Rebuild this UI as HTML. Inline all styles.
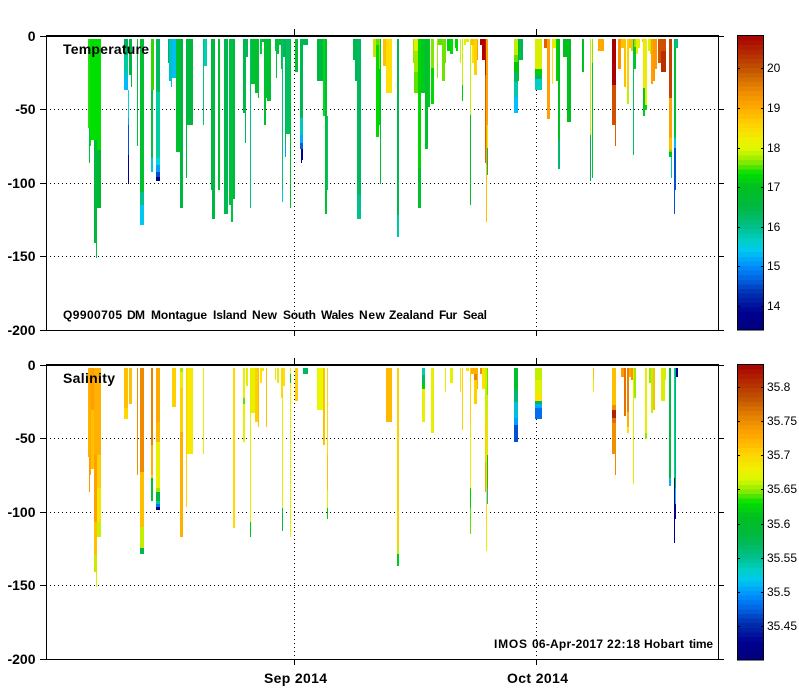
<!DOCTYPE html>
<html><head><meta charset="utf-8"><title>Temperature and Salinity</title>
<style>html,body{margin:0;padding:0;background:#fff}svg{display:block}text{font-family:"Liberation Sans",Arial,sans-serif;fill:#000}.b{font-weight:bold;font-size:14px}.s{font-weight:bold;font-size:12px}.c{font-size:12px}</style></head>
<body>
<svg xmlns="http://www.w3.org/2000/svg" width="799" height="700" viewBox="0 0 799 700">
<defs>
<g id="cb" shape-rendering="crispEdges">
<rect y="0" width="26" height="1.1" fill="#a80600"/><rect y="1" width="26" height="1.1" fill="#ad1100"/><rect y="2" width="26" height="1.1" fill="#b11d00"/><rect y="3" width="26" height="1.1" fill="#b42800"/><rect y="4" width="26" height="1.1" fill="#b73300"/><rect y="5" width="26" height="1.1" fill="#bb3f00"/><rect y="6" width="26" height="1.1" fill="#bf4b00"/><rect y="7" width="26" height="1.1" fill="#c45600"/>
<rect y="8" width="26" height="1.1" fill="#cd6200"/><rect y="9" width="26" height="1.1" fill="#d66e00"/><rect y="10" width="26" height="1.1" fill="#df7900"/><rect y="11" width="26" height="1.1" fill="#e88500"/><rect y="12" width="26" height="1.1" fill="#f09000"/><rect y="13" width="26" height="1.1" fill="#f59900"/><rect y="14" width="26" height="1.1" fill="#fba100"/><rect y="15" width="26" height="1.1" fill="#ffa800"/>
<rect y="16" width="26" height="1.1" fill="#ffb400"/><rect y="17" width="26" height="1.1" fill="#ffbf00"/><rect y="18" width="26" height="1.1" fill="#ffcb00"/><rect y="19" width="26" height="1.1" fill="#fdd500"/><rect y="20" width="26" height="1.1" fill="#f9dd00"/><rect y="21" width="26" height="1.1" fill="#f5e600"/><rect y="22" width="26" height="1.1" fill="#f0ef00"/><rect y="23" width="26" height="1.1" fill="#e7f300"/>
<rect y="24" width="26" height="1.1" fill="#dcf700"/><rect y="25" width="26" height="1.1" fill="#c4f400"/><rect y="26" width="26" height="1.1" fill="#a4ef00"/><rect y="27" width="26" height="1.1" fill="#84e900"/><rect y="28" width="26" height="1.1" fill="#4fe500"/><rect y="29" width="26" height="1.1" fill="#13e100"/><rect y="30" width="26" height="1.1" fill="#00d907"/><rect y="31" width="26" height="1.1" fill="#00d011"/>
<rect y="32" width="26" height="1.1" fill="#00c41c"/><rect y="33" width="26" height="1.1" fill="#00bf24"/><rect y="34" width="26" height="1.1" fill="#00bd2c"/><rect y="35" width="26" height="1.1" fill="#00bb34"/><rect y="36" width="26" height="1.1" fill="#00b93b"/><rect y="37" width="26" height="1.1" fill="#00b946"/><rect y="38" width="26" height="1.1" fill="#00ba57"/><rect y="39" width="26" height="1.1" fill="#00bc67"/>
<rect y="40" width="26" height="1.1" fill="#00be79"/><rect y="41" width="26" height="1.1" fill="#00bf89"/><rect y="42" width="26" height="1.1" fill="#00c49c"/><rect y="43" width="26" height="1.1" fill="#00cbb2"/><rect y="44" width="26" height="1.1" fill="#00cfc6"/><rect y="45" width="26" height="1.1" fill="#00ccd9"/><rect y="46" width="26" height="1.1" fill="#00c9ed"/><rect y="47" width="26" height="1.1" fill="#00bbf3"/>
<rect y="48" width="26" height="1.1" fill="#00a9f8"/><rect y="49" width="26" height="1.1" fill="#0098fd"/><rect y="50" width="26" height="1.1" fill="#0087f9"/><rect y="51" width="26" height="1.1" fill="#0078f0"/><rect y="52" width="26" height="1.1" fill="#0069e6"/><rect y="53" width="26" height="1.1" fill="#005ada"/><rect y="54" width="26" height="1.1" fill="#0048c8"/><rect y="55" width="26" height="1.1" fill="#0038b8"/>
<rect y="56" width="26" height="1.1" fill="#002aac"/><rect y="57" width="26" height="1.1" fill="#001fa5"/><rect y="58" width="26" height="1.1" fill="#00139d"/><rect y="59" width="26" height="1.1" fill="#000794"/><rect y="60" width="26" height="1.1" fill="#00008f"/><rect y="61" width="26" height="1.1" fill="#00008a"/><rect y="62" width="26" height="1.1" fill="#000085"/><rect y="63" width="26" height="1" fill="#000081"/>
</g>
</defs>
<g shape-rendering="crispEdges">
<!-- GRID dotted -->
<g stroke="#000" stroke-width="1" stroke-dasharray="1 3" fill="none">
<path d="M50 109.5H718M50 183.5H718M50 256.5H718M50 438.5H718M50 512.5H718M50 585.5H718"/>
<path d="M294.5 42V330M536.5 42V330M294.5 371V659M536.5 371V659"/>
</g>
<!-- TOP BARS -->
<path fill="#20e010" d="M88 39H90V128H88z"/><path fill="#00c040" d="M89 128H90V163H89z"/>
<path fill="#00e000" d="M90 39H91V146H90z"/><path fill="#00e000" d="M91 39H94V140H91z"/>
<path fill="#00e000" d="M94 39H97V140H94z"/><path fill="#00b840" d="M94 140H97V243H94z"/><path fill="#00c040" d="M96 243H97V258H96z"/>
<path fill="#00e000" d="M97 39H101V150H97z"/><path fill="#00b830" d="M97 150H101V208H97z"/>
<path fill="#00b060" d="M124 39H128V55H124z"/><path fill="#00c8a0" d="M124 55H128V72H124z"/><path fill="#00c0e0" d="M124 72H128V80H124z"/><path fill="#00b8ff" d="M124 80H128V90H124z"/>
<path fill="#00d8d8" d="M128 90H129V118H128z"/><path fill="#00a0ff" d="M128 118H129V125H128z"/><path fill="#0050e0" d="M128 125H129V155H128z"/><path fill="#000090" d="M128 155H129V184H128z"/>
<path fill="#00b840" d="M129 39H132V75H129z"/><path fill="#00c040" d="M131 75H132V87H131z"/>
<path fill="#00c040" d="M137 39H138V146H137z"/>
<path fill="#00c030" d="M140 39H144V192H140z"/><path fill="#00c090" d="M140 192H144V205H140z"/><path fill="#00c8f0" d="M140 205H144V225H140z"/>
<path fill="#30d800" d="M151 39H154V90H151z"/><path fill="#00c040" d="M151 90H153V158H151z"/><path fill="#00c8e0" d="M151 158H153V172H151z"/>
<path fill="#00b860" d="M156 39H160V92H156z"/><path fill="#00d0a0" d="M156 92H160V158H156z"/><path fill="#00d8e0" d="M156 158H160V165H156z"/><path fill="#00a0ff" d="M156 165H160V172H156z"/><path fill="#0050d0" d="M156 172H160V177H156z"/><path fill="#000090" d="M156 177H160V181H156z"/>
<path fill="#00b840" d="M168 39H169V63H168z"/><path fill="#00c0d0" d="M169 39H172V81H169z"/><path fill="#00c0d0" d="M171 81H172V87H171z"/><path fill="#00c0f0" d="M172 39H176V78H172z"/>
<path fill="#00c030" d="M176 39H180V152H176z"/><path fill="#00b840" d="M180 39H183V208H180z"/>
<path fill="#00b840" d="M186 39H187V178H186z"/><path fill="#00b840" d="M187 39H193V125H187z"/>
<path fill="#00c080" d="M203 39H204V125H203z"/><path fill="#00d0b0" d="M204 39H207V66H204z"/>
<path fill="#00b840" d="M211 39H215V190H211z"/><path fill="#00b840" d="M212 190H215V219H212z"/>
<path fill="#00c030" d="M218 39H220V190H218z"/>
<path fill="#00b850" d="M224 39H228V214H224z"/>
<path fill="#00c040" d="M229 39H231V205H229z"/><path fill="#00c040" d="M231 39H233V222H231z"/><path fill="#00b840" d="M233 39H235V199H233z"/>
<path fill="#00b840" d="M243 39H245V113H243z"/><path fill="#00b860" d="M245 39H246V143H245z"/><path fill="#00b850" d="M246 39H248V57H246z"/>
<path fill="#00c080" d="M250 39H251V208H250z"/><path fill="#00c030" d="M251 39H255V84H251z"/><path fill="#00c030" d="M255 39H258V93H255z"/><path fill="#00c030" d="M258 39H259V98H258z"/>
<path fill="#00c840" d="M260 39H262V54H260z"/><path fill="#00c030" d="M262 39H264V42H262z"/><path fill="#00c030" d="M264 39H266V125H264z"/><path fill="#00c030" d="M266 39H267V98H266z"/><path fill="#00c030" d="M267 39H271V101H267z"/>
<path fill="#00c040" d="M275 39H276V51H275z"/><path fill="#00c040" d="M276 39H277V78H276z"/><path fill="#00c040" d="M277 39H279V54H277z"/><path fill="#00c040" d="M279 39H281V45H279z"/><path fill="#00c040" d="M281 39H282V69H281z"/>
<path fill="#00c080" d="M282 39H283V190H282z"/><path fill="#00c8f0" d="M282 190H283V202H282z"/>
<path fill="#00b850" d="M283 39H285V57H283z"/><path fill="#00b850" d="M285 39H286V145H285z"/><path fill="#00a0ff" d="M285 145H286V157H285z"/><path fill="#00c060" d="M286 39H290V134H286z"/><path fill="#00c030" d="M290 39H291V208H290z"/>
<path fill="#00c030" d="M295 39H298V72H295z"/>
<path fill="#00b850" d="M300 39H303V118H300z"/><path fill="#00c8c0" d="M300 118H303V135H300z"/><path fill="#00a8ff" d="M300 135H303V143H300z"/><path fill="#0060e0" d="M300 143H303V149H300z"/><path fill="#000090" d="M301 149H303V160H301z"/><path fill="#000090" d="M301 160H302V163H301z"/>
<path fill="#00b850" d="M303 39H308V45H303z"/>
<path fill="#00b840" d="M317 39H323V81H317z"/><path fill="#00d820" d="M323 39H325V116H323z"/><path fill="#00c030" d="M325 39H327V214H325z"/><path fill="#00c080" d="M327 116H328V190H327z"/>
<path fill="#00b850" d="M353 39H355V60H353z"/><path fill="#00b850" d="M355 39H357V81H355z"/><path fill="#00b860" d="M357 39H361V195H357z"/><path fill="#00c090" d="M357 195H361V219H357z"/>
<path fill="#c0e800" d="M373 39H376V57H373z"/><path fill="#60e000" d="M376 39H379V45H376z"/><path fill="#00d800" d="M376 45H379V137H376z"/><path fill="#90e000" d="M379 39H380V69H379z"/><path fill="#00d000" d="M379 69H380V125H379z"/><path fill="#00c030" d="M380 39H381V184H380z"/>
<path fill="#ffc000" d="M383 39H386V66H383z"/><path fill="#ffe000" d="M386 39H392V93H386z"/>
<path fill="#00b850" d="M397 39H399V215H397z"/><path fill="#00c8a0" d="M397 215H399V237H397z"/>
<path fill="#a0e000" d="M413 39H414V63H413z"/><path fill="#e0f000" d="M414 39H418V51H414z"/><path fill="#a0e800" d="M414 51H418V72H414z"/><path fill="#60e000" d="M414 72H418V93H414z"/>
<path fill="#00d800" d="M418 39H421V168H418z"/><path fill="#00c030" d="M418 168H421V208H418z"/><path fill="#00c820" d="M421 39H425V93H421z"/><path fill="#00c030" d="M425 39H428V149H425z"/><path fill="#00c820" d="M428 39H430V107H428z"/>
<path fill="#80e800" d="M431 39H434V68H431z"/><path fill="#00d800" d="M431 68H434V104H431z"/>
<path fill="#a0e800" d="M437 39H438V78H437z"/><path fill="#60e000" d="M438 39H442V45H438z"/><path fill="#70e000" d="M442 39H445V81H442z"/><path fill="#70e000" d="M445 39H446V63H445z"/>
<path fill="#00d010" d="M447 39H450V51H447z"/><path fill="#00e000" d="M450 39H453V54H450z"/><path fill="#00d800" d="M455 39H458V48H455z"/><path fill="#00d800" d="M456 48H458V51H456z"/>
<path fill="#d0f000" d="M460 39H461V63H460z"/><path fill="#c0f000" d="M462 39H463V85H462z"/><path fill="#00d000" d="M462 85H463V101H462z"/>
<path fill="#e0f000" d="M464 39H469V42H464z"/><path fill="#e0f000" d="M464 42H466V45H464z"/>
<path fill="#c0f000" d="M470 39H471V115H470z"/><path fill="#00c030" d="M470 115H471V205H470z"/>
<path fill="#ffc000" d="M471 39H474V45H471z"/><path fill="#ffe000" d="M472 45H474V63H472z"/><path fill="#ffd000" d="M474 39H477V75H474z"/><path fill="#ffa000" d="M477 39H478V60H477z"/>
<path fill="#b00000" d="M480 39H482V45H480z"/><path fill="#b00000" d="M482 39H485V60H482z"/><path fill="#b02000" d="M485 39H486V75H485z"/><path fill="#e06000" d="M485 75H486V163H485z"/>
<path fill="#ffa000" d="M486 39H487V165H486z"/><path fill="#ffc000" d="M486 165H487V222H486z"/><path fill="#ffa000" d="M487 39H488V125H487z"/><path fill="#e0f000" d="M487 125H488V148H487z"/><path fill="#00b860" d="M487 148H488V175H487z"/>
<path fill="#c0f000" d="M514 39H518V55H514z"/><path fill="#60e000" d="M514 55H518V62H514z"/><path fill="#00c800" d="M514 62H518V72H514z"/><path fill="#00b860" d="M514 72H518V82H514z"/><path fill="#00c8b0" d="M514 82H518V97H514z"/><path fill="#00c0ff" d="M514 97H518V113H514z"/>
<path fill="#00c020" d="M518 39H519V81H518z"/><path fill="#00b850" d="M519 39H523V60H519z"/>
<path fill="#d8f000" d="M535 39H542V69H535z"/><path fill="#00d000" d="M535 69H542V75H535z"/><path fill="#00b860" d="M535 75H542V79H535z"/><path fill="#00d0c0" d="M535 79H542V90H535z"/>
<path fill="#e06000" d="M544 39H547V48H544z"/><path fill="#ffa000" d="M547 39H550V119H547z"/><path fill="#ffe000" d="M552 39H553V84H552z"/><path fill="#e0f000" d="M553 39H556V48H553z"/>
<path fill="#00d000" d="M556 39H558V81H556z"/><path fill="#00c020" d="M558 39H560V140H558z"/><path fill="#00b870" d="M558 140H560V169H558z"/>
<path fill="#00c020" d="M563 39H567V57H563z"/><path fill="#00c020" d="M567 39H571V122H567z"/><path fill="#00c020" d="M582 39H584V72H582z"/>
<path fill="#c0f000" d="M590 39H591V135H590z"/><path fill="#00b850" d="M590 135H591V181H590z"/><path fill="#90e000" d="M592 39H593V63H592z"/><path fill="#00c040" d="M592 63H593V178H592z"/>
<path fill="#ffa800" d="M598 39H604V51H598z"/>
<path fill="#a80000" d="M612 39H616V85H612z"/><path fill="#d05000" d="M612 85H616V125H612z"/><path fill="#e06000" d="M615 125H616V146H615z"/>
<path fill="#ff9000" d="M618 39H621V69H618z"/><path fill="#ffc000" d="M621 39H624V48H621z"/><path fill="#ffc000" d="M624 39H626V87H624z"/>
<path fill="#ffd000" d="M627 39H629V88H627z"/><path fill="#c0f000" d="M627 88H629V104H627z"/><path fill="#ffc000" d="M629 39H631V48H629z"/><path fill="#ffc000" d="M631 39H633V51H631z"/><path fill="#00c060" d="M633 39H634V155H633z"/>
<path fill="#a0e000" d="M634 39H636V47H634z"/><path fill="#00c820" d="M634 47H636V69H634z"/><path fill="#e8f000" d="M636 39H638V54H636z"/><path fill="#e0f000" d="M638 39H640V48H638z"/>
<path fill="#ffc000" d="M642 39H643V42H642z"/><path fill="#f0e800" d="M643 39H645V88H643z"/><path fill="#00c820" d="M643 88H645V116H643z"/><path fill="#e8f000" d="M645 39H647V105H645z"/><path fill="#00d800" d="M645 105H647V110H645z"/>
<path fill="#e0f000" d="M648 39H650V51H648z"/><path fill="#c0f000" d="M650 39H651V54H650z"/><path fill="#ffa000" d="M651 39H653V84H651z"/><path fill="#ff9800" d="M653 39H655V81H653z"/><path fill="#ff9800" d="M655 39H657V69H655z"/>
<path fill="#d05000" d="M658 39H661V63H658z"/><path fill="#d05000" d="M661 39H666V51H661z"/><path fill="#b83000" d="M661 51H666V72H661z"/>
<path fill="#c84000" d="M669 39H672V98H669z"/><path fill="#ffa000" d="M669 98H672V138H669z"/><path fill="#ffc000" d="M669 138H672V150H669z"/><path fill="#70e000" d="M669 150H672V152H669z"/><path fill="#00c020" d="M669 152H672V157H669z"/><path fill="#00c8a0" d="M671 157H672V178H671z"/>
<path fill="#00c030" d="M674 39H676V138H674z"/><path fill="#00c0f0" d="M674 138H676V148H674z"/><path fill="#0050d8" d="M674 148H676V190H674z"/><path fill="#0050d8" d="M674 190H675V214H674z"/><path fill="#00c080" d="M675 39H678V48H675z"/>
<!-- BOTTOM BARS -->
<path fill="#ffb000" d="M88 368H90V457H88z"/><path fill="#ff9800" d="M89 457H90V492H89z"/><path fill="#ffa800" d="M90 368H91V475H90z"/>
<path fill="#ffa000" d="M91 368H94V410H91z"/><path fill="#ffc000" d="M91 410H94V469H91z"/>
<path fill="#ffb000" d="M94 368H97V455H94z"/><path fill="#ffa000" d="M94 455H97V522H94z"/><path fill="#ffc000" d="M94 522H97V555H94z"/><path fill="#d0e800" d="M94 555H97V572H94z"/><path fill="#d8f000" d="M96 572H97V587H96z"/>
<path fill="#ffb000" d="M97 368H101V455H97z"/><path fill="#ffd000" d="M97 455H101V488H97z"/><path fill="#f0e800" d="M97 488H101V522H97z"/><path fill="#c8f000" d="M97 522H101V537H97z"/>
<path fill="#ffc000" d="M124 368H128V408H124z"/><path fill="#ffd800" d="M124 408H128V419H124z"/><path fill="#ffc000" d="M129 368H132V404H129z"/><path fill="#f09000" d="M137 368H138V475H137z"/>
<path fill="#f08800" d="M140 368H144V472H140z"/><path fill="#ffc000" d="M140 472H144V527H140z"/><path fill="#c0f000" d="M140 527H144V548H140z"/><path fill="#00b850" d="M140 548H144V554H140z"/>
<path fill="#e88000" d="M151 368H153V445H151z"/><path fill="#ffb000" d="M151 445H153V475H151z"/><path fill="#ffd000" d="M151 475H153V478H151z"/><path fill="#00c030" d="M151 478H153V501H151z"/>
<path fill="#ffa800" d="M156 368H160V422H156z"/><path fill="#ffb800" d="M156 422H160V442H156z"/><path fill="#e8f000" d="M156 442H160V488H156z"/><path fill="#a0e800" d="M156 488H160V492H156z"/><path fill="#00b840" d="M156 492H160V501H156z"/><path fill="#00c8a0" d="M156 501H160V504H156z"/><path fill="#0080f0" d="M156 504H160V507H156z"/><path fill="#000090" d="M156 507H160V510H156z"/>
<path fill="#ffd000" d="M172 368H176V407H172z"/>
<path fill="#a0f000" d="M180 368H183V372H180z"/><path fill="#e8f000" d="M180 372H183V388H180z"/><path fill="#ffd000" d="M180 388H183V432H180z"/><path fill="#ffb000" d="M180 432H183V537H180z"/>
<path fill="#ffd000" d="M186 368H187V507H186z"/><path fill="#f8e800" d="M187 368H193V454H187z"/><path fill="#e8f000" d="M203 368H204V454H203z"/><path fill="#ffd800" d="M233 368H235V528H233z"/>
<path fill="#e8f000" d="M243 368H245V398H243z"/><path fill="#60e000" d="M243 398H245V404H243z"/><path fill="#e8f000" d="M243 404H245V442H243z"/><path fill="#e0f000" d="M246 368H248V386H246z"/>
<path fill="#e8f000" d="M250 368H251V522H250z"/><path fill="#00c820" d="M250 522H251V537H250z"/><path fill="#e8f000" d="M251 368H255V413H251z"/><path fill="#ffd000" d="M255 368H258V422H255z"/><path fill="#ffc000" d="M258 368H259V427H258z"/>
<path fill="#ffe000" d="M260 368H262V383H260z"/><path fill="#ffe000" d="M262 368H264V371H262z"/><path fill="#ffc000" d="M266 368H267V427H266z"/>
<path fill="#ffd800" d="M275 368H276V380H275z"/><path fill="#e0f000" d="M277 368H279V383H277z"/><path fill="#ffd800" d="M281 368H283V398H281z"/><path fill="#e8f000" d="M282 398H283V508H282z"/><path fill="#00c040" d="M282 508H283V531H282z"/>
<path fill="#ffe000" d="M283 368H285V386H283z"/><path fill="#e8f000" d="M290 368H291V374H290z"/><path fill="#00d000" d="M290 374H291V383H290z"/><path fill="#e8f000" d="M290 383H291V537H290z"/>
<path fill="#ffd000" d="M295 368H298V401H295z"/><path fill="#00b860" d="M303 368H308V374H303z"/>
<path fill="#e8f800" d="M317 368H323V410H317z"/><path fill="#ffc000" d="M323 368H325V445H323z"/>
<path fill="#ffd800" d="M327 368H328V455H327z"/><path fill="#ffc000" d="M327 455H328V490H327z"/><path fill="#e0f000" d="M327 490H328V508H327z"/><path fill="#00d000" d="M327 508H328V519H327z"/>
<path fill="#ffb800" d="M386 368H392V422H386z"/>
<path fill="#ffd000" d="M397 368H399V545H397z"/><path fill="#c0f000" d="M397 545H399V554H397z"/><path fill="#00c820" d="M397 554H399V566H397z"/>
<path fill="#00d0a0" d="M422 368H425V375H422z"/><path fill="#00b860" d="M422 375H425V383H422z"/><path fill="#00d000" d="M422 383H425V389H422z"/><path fill="#e8f000" d="M422 389H425V422H422z"/>
<path fill="#e8f000" d="M431 368H434V433H431z"/><path fill="#e8f000" d="M445 368H446V392H445z"/><path fill="#e8f000" d="M450 368H453V383H450z"/>
<path fill="#ffe000" d="M460 368H461V392H460z"/><path fill="#ffd000" d="M462 368H463V430H462z"/><path fill="#ffe000" d="M466 368H469V371H466z"/>
<path fill="#ffd000" d="M470 368H471V425H470z"/><path fill="#e8f000" d="M470 425H471V488H470z"/><path fill="#00d000" d="M470 488H471V508H470z"/><path fill="#60e000" d="M470 508H471V534H470z"/>
<path fill="#ffb000" d="M471 368H474V374H471z"/><path fill="#ffb000" d="M474 368H477V374H474z"/><path fill="#f08000" d="M474 374H477V380H474z"/><path fill="#ffd000" d="M474 380H477V404H474z"/><path fill="#ffb000" d="M477 368H478V389H477z"/>
<path fill="#f09000" d="M480 368H482V374H480z"/><path fill="#ffe000" d="M482 368H485V389H482z"/>
<path fill="#c8f000" d="M485 368H486V422H485z"/><path fill="#ffd000" d="M485 422H486V462H485z"/><path fill="#ffa000" d="M485 462H486V492H485z"/>
<path fill="#c8f000" d="M486 368H487V410H486z"/><path fill="#ffd800" d="M486 410H487V525H486z"/><path fill="#e8f000" d="M486 525H487V551H486z"/>
<path fill="#70e000" d="M487 368H488V395H487z"/><path fill="#d0f000" d="M487 395H488V455H487z"/><path fill="#00c820" d="M487 455H488V488H487z"/><path fill="#00b0ff" d="M487 488H488V504H487z"/>
<path fill="#00c030" d="M514 368H518V390H514z"/><path fill="#00b870" d="M514 390H518V402H514z"/><path fill="#00c0e0" d="M514 402H518V418H514z"/><path fill="#00a0ff" d="M514 418H518V425H514z"/><path fill="#0050d8" d="M514 425H518V442H514z"/>
<path fill="#c0f000" d="M535 368H542V380H535z"/><path fill="#e0f000" d="M535 380H542V395H535z"/><path fill="#ffe000" d="M535 395H542V401H535z"/><path fill="#00b860" d="M535 401H542V404H535z"/><path fill="#00a8ff" d="M535 404H542V408H535z"/><path fill="#0070f0" d="M535 408H542V419H535z"/>
<path fill="#ffc000" d="M593 368H594V380H593z"/><path fill="#e8f000" d="M593 380H594V392H593z"/>
<path fill="#ffc000" d="M612 368H616V405H612z"/><path fill="#f09000" d="M612 405H616V410H612z"/><path fill="#b02000" d="M612 410H616V418H612z"/><path fill="#e07000" d="M612 418H616V423H612z"/><path fill="#f09000" d="M612 423H616V454H612z"/><path fill="#f08800" d="M615 454H616V475H615z"/>
<path fill="#ff9800" d="M621 368H624V377H621z"/><path fill="#e87000" d="M624 368H626V416H624z"/>
<path fill="#f08000" d="M627 368H629V412H627z"/><path fill="#ffb000" d="M627 412H629V427H627z"/><path fill="#ffe000" d="M627 427H629V433H627z"/>
<path fill="#ffa800" d="M629 368H631V377H629z"/><path fill="#ff9000" d="M631 368H633V380H631z"/><path fill="#e0f000" d="M633 368H634V484H633z"/><path fill="#a0e800" d="M634 368H636V398H634z"/>
<path fill="#e8f000" d="M645 368H647V433H645z"/><path fill="#90e800" d="M645 433H647V439H645z"/>
<path fill="#a0e800" d="M649 368H651V383H649z"/><path fill="#c0f000" d="M651 368H653V413H651z"/><path fill="#ffc000" d="M653 368H655V410H653z"/>
<path fill="#d8f000" d="M661 368H665V401H661z"/><path fill="#c8f000" d="M665 368H666V380H665z"/>
<path fill="#00b840" d="M669 368H671V478H669z"/><path fill="#00c8c0" d="M669 478H671V480H669z"/><path fill="#00b0ff" d="M669 480H671V486H669z"/>
<path fill="#00c8c0" d="M674 368H675V478H674z"/><path fill="#000090" d="M674 478H675V543H674z"/><path fill="#00c040" d="M675 368H676V488H675z"/><path fill="#00c8f0" d="M675 488H676V504H675z"/><path fill="#000090" d="M675 504H676V519H675z"/><path fill="#000090" d="M676 368H678V377H676z"/>
<!-- AXES -->
<g fill="#000">
<path d="M46 35H718V37H46z"/><path d="M46 35H47V331H46z"/><path d="M718 35H719V331H718z"/><path d="M40 330H724V331H40z"/>
<path d="M40 36H46V37H40zM40 109H46V110H40zM40 183H46V184H40zM40 256H46V257H40z"/>
<path d="M719 36H724V37H719zM719 109H724V110H719zM719 183H724V184H719zM719 256H724V257H719z"/>
<path d="M294 29H295V35H294zM536 29H537V35H536zM294 331H295V336H294zM536 331H537V336H536z"/>
<path d="M46 364H718V366H46z"/><path d="M46 364H47V660H46z"/><path d="M718 364H719V660H718z"/><path d="M40 659H724V660H40z"/>
<path d="M40 365H46V366H40zM40 438H46V439H40zM40 512H46V513H40zM40 585H46V586H40z"/>
<path d="M719 365H724V366H719zM719 438H724V439H719zM719 512H724V513H719zM719 585H724V586H719z"/>
<path d="M294 358H295V364H294zM536 358H537V364H536zM294 660H295V665H294zM536 660H537V665H536z"/>
</g>
<!-- COLORBARS -->
<use href="#cb" transform="translate(737.5,36) scale(1,4.6)"/>
<use href="#cb" transform="translate(737.5,365) scale(1,4.61)"/>
<rect x="737.5" y="35.5" width="26" height="294.5" fill="none" stroke="#000"/>
<rect x="737.5" y="364.5" width="26" height="295.5" fill="none" stroke="#000"/>
<path stroke="#000" d="M738 68.5H740M761 68.5H763M738 108.5H740M761 108.5H763M738 148.5H740M761 148.5H763M738 187.5H740M761 187.5H763M738 227.5H740M761 227.5H763M738 266.5H740M761 266.5H763M738 306.5H740M761 306.5H763"/>
<path stroke="#000" d="M738 387.5H740M761 387.5H763M738 421.5H740M761 421.5H763M738 455.5H740M761 455.5H763M738 489.5H740M761 489.5H763M738 524.5H740M761 524.5H763M738 558.5H740M761 558.5H763M738 592.5H740M761 592.5H763M738 626.5H740M761 626.5H763"/>
</g>
<!-- TICK LABELS -->
<g text-anchor="end">
<text class="b" x="35.5" y="41">0</text><text class="b" x="35.5" y="114">-50</text><text class="b" x="35.5" y="188">-100</text><text class="b" x="35.5" y="261">-150</text><text class="b" x="35.5" y="335">-200</text>
<text class="b" x="35.5" y="370">0</text><text class="b" x="35.5" y="443">-50</text><text class="b" x="35.5" y="517">-100</text><text class="b" x="35.5" y="590">-150</text><text class="b" x="35.5" y="664">-200</text>
</g>
<text class="b" x="264" y="683" textLength="63">Sep 2014</text>
<text class="b" x="507" y="683" textLength="61">Oct 2014</text>
<text class="b" x="63" y="54" textLength="86">Temperature</text>
<text class="b" x="63" y="383" textLength="52">Salinity</text>
<g class="s">
<text class="s" x="63" y="319" textLength="59">Q9900705</text><text class="s" x="127" y="319" textLength="18">DM</text><text class="s" x="151" y="319" textLength="56">Montague</text><text class="s" x="213" y="319" textLength="34">Island</text><text class="s" x="252" y="319" textLength="25">New</text><text class="s" x="283" y="319" textLength="33">South</text><text class="s" x="321" y="319" textLength="33">Wales</text><text class="s" x="359" y="319" textLength="26">New</text><text class="s" x="389" y="319" textLength="45">Zealand</text><text class="s" x="439" y="319" textLength="18">Fur</text><text class="s" x="463" y="319" textLength="24">Seal</text>
<text class="s" x="494" y="648" textLength="33">IMOS</text><text class="s" x="532" y="648" textLength="71">06-Apr-2017</text><text class="s" x="607" y="648" textLength="33">22:18</text><text class="s" x="644" y="648" textLength="40">Hobart</text><text class="s" x="689" y="648" textLength="24">time</text>
</g>
<!-- COLORBAR LABELS -->
<text class="c" x="767" y="72">20</text><text class="c" x="767" y="112">19</text><text class="c" x="767" y="152">18</text><text class="c" x="767" y="191">17</text><text class="c" x="767" y="231">16</text><text class="c" x="767" y="270">15</text><text class="c" x="767" y="310">14</text>
<text class="c" x="767" y="391">35.8</text><text class="c" x="767" y="425">35.75</text><text class="c" x="767" y="459">35.7</text><text class="c" x="767" y="493">35.65</text><text class="c" x="767" y="528">35.6</text><text class="c" x="767" y="562">35.55</text><text class="c" x="767" y="596">35.5</text><text class="c" x="767" y="630">35.45</text>
</svg>
</body></html>
